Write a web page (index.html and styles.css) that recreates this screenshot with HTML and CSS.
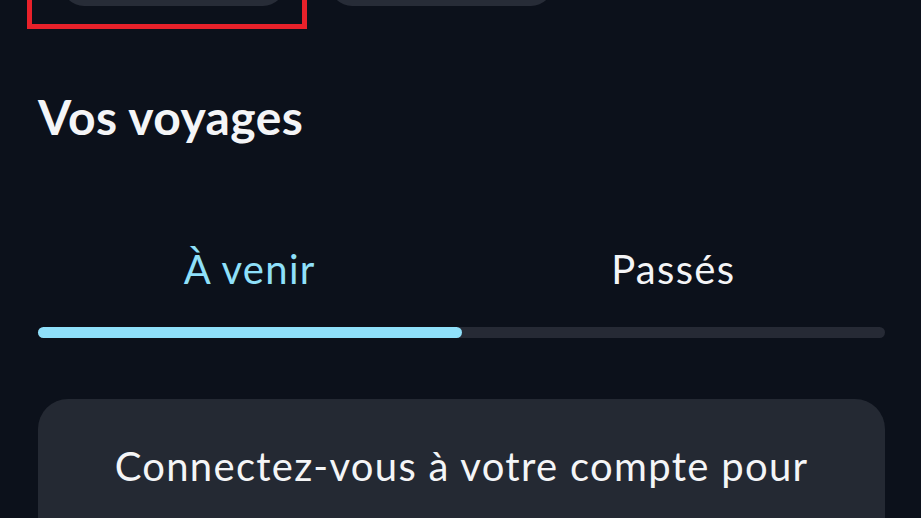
FILE: index.html
```html
<!DOCTYPE html>
<html lang="fr">
<head>
    <meta charset="UTF-8">
    <meta name="viewport" content="width=device-width, initial-scale=1.0">
    <title>Vos voyages</title>
    <link rel="stylesheet" href="styles.css">
</head>
<body>
    <div class="page">
        <div class="quick-links">
            <div class="quick-link"></div>
            <div class="quick-link"></div>
            <div class="highlight"></div>
        </div>

        <h1 class="section-title">Vos voyages</h1>

        <div class="tabs">
            <div class="tab active">À venir</div>
            <div class="tab">Passés</div>
        </div>
        <div class="tab-track">
            <div class="tab-fill"></div>
        </div>

        <div class="card">
            <p>Connectez-vous à votre compte pour<br>les afficher et les gérer ici.</p>
        </div>
    </div>
</body>
</html>
```

FILE: styles.css
```css
* {
    box-sizing: border-box;
}
body {
    margin: 0;
    background-color: #0c111b;
    color: #f4f5f7;
    font-family: 'Lato', 'Noto Sans', sans-serif;
    overflow: hidden;
}
.page {
    padding: 0 36px 0 38px;
}
.quick-links {
    position: relative;
    display: flex;
    gap: 45px;
    padding-left: 24px;
    margin-top: -50px;
}
.quick-link {
    width: 223px;
    height: 56px;
    border-radius: 22px;
    background-color: #272c37;
}
.highlight {
    position: absolute;
    left: -11px;
    top: 40px;
    width: 280px;
    height: 39px;
    border: 5px solid #e8212a;
}
.section-title {
    margin: 83px 0 0;
    font-size: 48px;
    font-weight: 700;
    line-height: 56px;
    letter-spacing: 0.4px;
}
.tabs {
    display: flex;
    margin-top: 100px;
}
.tab {
    flex: 1;
    text-align: center;
    font-size: 40px;
    line-height: 48px;
    letter-spacing: 1.3px;
    color: #f4f5f7;
}
.tab.active {
    color: #8fe0fa;
}
.tab-track {
    margin-top: 34px;
    height: 11px;
    border-radius: 6px;
    background-color: #262a35;
}
.tab-fill {
    width: 50%;
    height: 100%;
    border-radius: 6px;
    background-color: #8fe0fa;
}
.card {
    margin-top: 61px;
    padding: 32px 30px;
    border-radius: 30px;
    background-color: #242933;
    text-align: center;
}
.card p {
    margin: 0;
    font-size: 40px;
    line-height: 71px;
    letter-spacing: 1.3px;
}
```
